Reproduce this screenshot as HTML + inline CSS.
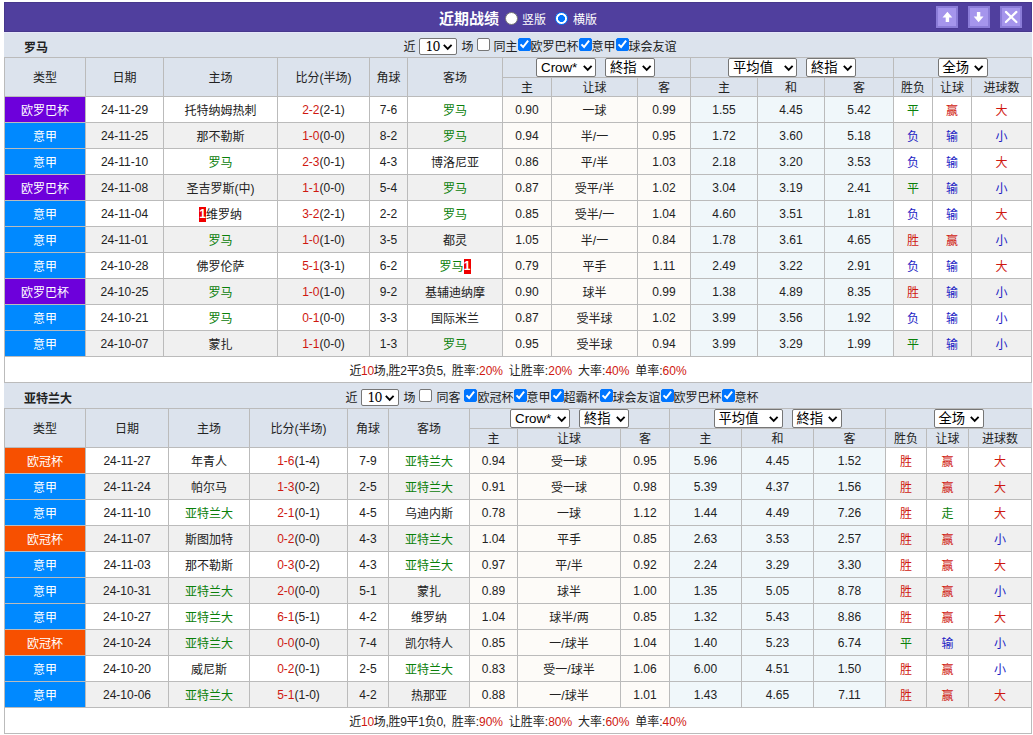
<!DOCTYPE html>
<html lang="zh-CN"><head><meta charset="utf-8"><title>近期战绩</title>
<style>
*{box-sizing:border-box}
html,body{margin:0;padding:0;background:#fff}
body{width:1033px;height:735px;overflow:hidden;font-family:"Liberation Sans","Noto Sans CJK SC",sans-serif;font-size:12px;color:#222;position:relative}
#w{position:absolute;left:4px;top:2px;width:1028px}
.top{height:30px;background:#503f9e;box-shadow:inset 0 0 0 1px #47388c;color:#fff;position:relative;text-align:center;line-height:36px;white-space:nowrap}
.top b{font-size:15px;font-weight:bold;display:inline-block;vertical-align:top;position:relative;top:-1px}
.rd{display:inline-block;width:13px;height:13px;border-radius:50%;background:#fff;border:1px solid #767676;vertical-align:top;margin-top:10px}
.rd.on{border:1px solid #0075ff;background:radial-gradient(circle,#0075ff 0,#0075ff 3.2px,#fff 3.8px)}
.ib{position:absolute;top:4px;width:22px;height:22px;background:#a595ec;border:2px solid #8b7cd8;box-shadow:0 1px 0 #4a3994}
.ib svg{position:absolute;left:0;top:0}
.bar{height:25px;overflow:hidden;background:#dce3ed;line-height:31px;text-align:center;white-space:nowrap;position:relative}
.bar.first{box-shadow:inset 0 1px 0 #e6e6fa}
.tt{float:left;padding-left:20px;font-weight:bold;color:#222;position:relative;top:1px}
.ctl{display:inline-block;vertical-align:top}
.sp{display:inline-block;width:4px}
.sp.s3{width:3px}
.cb{display:inline-block;width:13px;height:13px;border:1px solid #767676;border-radius:2px;background:#fff;vertical-align:top;margin-top:6px;position:relative}
.cb.on{background:#0075ff;border-color:#0075ff}
.cb svg{position:absolute;left:-1px;top:-1px}
.sel{display:inline-block;height:19px;border:1px solid #767676;border-radius:2px;background:#fff;vertical-align:top;position:relative;text-align:left;line-height:16px;color:#000;font-size:13.33px}
.sel .st{position:absolute;left:4px;top:1px;white-space:nowrap}
.sel .chev{position:absolute;right:2.5px;top:5.5px}
.sel.ml{margin-left:9px}
.sel.s10{height:17px;margin-top:6px;font-family:"DejaVu Serif","Liberation Serif",serif;font-size:12.5px;letter-spacing:-0.8px;line-height:15px}
.sel.s10 .st{left:5px;top:0}
.sel.s10 .chev{top:4.5px;right:3.5px}
table.t{border-collapse:separate;border-spacing:1px;background:#bbb;table-layout:fixed;width:1028px}
.t th,.t td{padding:0;text-align:center;font-weight:normal;white-space:nowrap;overflow:hidden}
.t th{background:#dce3ed}
.h1 th{height:38px;padding-bottom:2px}
.h1 th.hs{height:19px;line-height:19px;padding:0}
.t1 .h1 th.hs.f{padding-right:2px}
.h2 th{height:18px;line-height:15px;padding-top:3px}
.t td{height:25px;line-height:22px;padding-top:3px;background:#fff}
.t td.n{line-height:23px;padding-top:2px}
.r1 td{background:#f0f0f0}
.t td.p{background:#fdfbf8}
.t td.q{background:#f0f7fa}
.t td.lg{color:#fff}
.t td.e{background:#6d00db}
.t td.s{background:#0089ff}
.t td.c{background:#f75000}
.g{color:#0a800a}.r{color:#cf1810}.b{color:#1c1cc4}
td.g{color:#0a800a}td.r{color:#cf1810}td.b{color:#1c1cc4}
.rc{background:#f00000;color:#fff;font-weight:bold;display:inline-block;line-height:15px;height:15px;width:7px;text-align:center;vertical-align:top;margin-top:3px;overflow:hidden}
.sm td{background:#fff !important;word-spacing:2.5px}
.sm .r{color:#cf1810}
.ls{letter-spacing:-0.3px}
</style></head>
<body>
<div id="w">
<div class="top"><b>近期战绩</b><span style="display:inline-block;width:6px"></span><span class="rd"></span><span style="display:inline-block;width:4px"></span>竖版<span style="display:inline-block;width:9px"></span><span class="rd on"></span><span style="display:inline-block;width:5px"></span>横版<span class="ib" style="left:932px"><svg width="18" height="18" viewBox="0 0 18 18"><path d="M9.4 3.8 L14.3 9.4 L11.1 9.4 L11.1 14 L7.7 14 L7.7 9.4 L4.5 9.4 Z" fill="#fff"/></svg></span><span class="ib" style="left:964px"><svg width="18" height="18" viewBox="0 0 18 18"><path d="M8.6 14.2 L3.7 8.6 L6.9 8.6 L6.9 4 L10.3 4 L10.3 8.6 L13.5 8.6 Z" fill="#fff"/></svg></span><span class="ib" style="left:996px"><svg width="18" height="18" viewBox="0 0 18 18"><path d="M3.9 3.9 L14.4 14 M14.4 3.9 L3.9 14" stroke="#fff" stroke-width="2.2" stroke-linecap="round" fill="none"/></svg></span></div>
<div class="bar first"><span class="tt">罗马</span><span class="ctl">近<span class="sp"></span><span class="sel s10" style="width:38px"><span class="st">10</span><svg class="chev" viewBox="0 0 10 7" width="10" height="7"><path d="M0.8 0.9 L4.7 4.8 L8.6 0.9" fill="none" stroke="#000" stroke-width="1.9" stroke-linecap="butt" stroke-linejoin="miter"/></svg></span><span class="sp"></span>场<span class="sp"></span><span class="cb"></span><span class="sp s3"></span>同主<span class="cb on"><svg viewBox="0 0 13 13" width="13" height="13"><path d="M2.5 6.4 L5.1 9 L10.1 2.7" fill="none" stroke="#fff" stroke-width="2"/></svg></span>欧罗巴杯<span class="cb on"><svg viewBox="0 0 13 13" width="13" height="13"><path d="M2.5 6.4 L5.1 9 L10.1 2.7" fill="none" stroke="#fff" stroke-width="2"/></svg></span>意甲<span class="cb on"><svg viewBox="0 0 13 13" width="13" height="13"><path d="M2.5 6.4 L5.1 9 L10.1 2.7" fill="none" stroke="#fff" stroke-width="2"/></svg></span>球会友谊</span></div>
<table class="t t1" cellspacing="1" cellpadding="0">
<colgroup><col style="width:80px"><col style="width:77px"><col style="width:113px"><col style="width:91px"><col style="width:37px"><col style="width:94px"><col style="width:48px"><col style="width:85px"><col style="width:52px"><col style="width:66px"><col style="width:66px"><col style="width:68px"><col style="width:38px"><col style="width:38px"><col style="width:59px"></colgroup>
<tr class="h h1"><th rowspan="2">类型</th><th rowspan="2">日期</th><th rowspan="2">主场</th><th rowspan="2">比分(半场)</th><th rowspan="2">角球</th><th rowspan="2">客场</th><th colspan="3" class="hs f"><span class="sel " style="width:60px"><span class="st">Crow*</span><svg class="chev" viewBox="0 0 10 7" width="10" height="7"><path d="M0.8 0.9 L4.7 4.8 L8.6 0.9" fill="none" stroke="#000" stroke-width="1.9" stroke-linecap="butt" stroke-linejoin="miter"/></svg></span><span class="sel ml" style="width:50px"><span class="st">終指</span><svg class="chev" viewBox="0 0 10 7" width="10" height="7"><path d="M0.8 0.9 L4.7 4.8 L8.6 0.9" fill="none" stroke="#000" stroke-width="1.9" stroke-linecap="butt" stroke-linejoin="miter"/></svg></span></th><th colspan="3" class="hs"><span class="sel " style="width:69px"><span class="st">平均值</span><svg class="chev" viewBox="0 0 10 7" width="10" height="7"><path d="M0.8 0.9 L4.7 4.8 L8.6 0.9" fill="none" stroke="#000" stroke-width="1.9" stroke-linecap="butt" stroke-linejoin="miter"/></svg></span><span class="sel ml" style="width:50px"><span class="st">終指</span><svg class="chev" viewBox="0 0 10 7" width="10" height="7"><path d="M0.8 0.9 L4.7 4.8 L8.6 0.9" fill="none" stroke="#000" stroke-width="1.9" stroke-linecap="butt" stroke-linejoin="miter"/></svg></span></th><th colspan="3" class="hs"><span class="sel " style="width:50px"><span class="st">全场</span><svg class="chev" viewBox="0 0 10 7" width="10" height="7"><path d="M0.8 0.9 L4.7 4.8 L8.6 0.9" fill="none" stroke="#000" stroke-width="1.9" stroke-linecap="butt" stroke-linejoin="miter"/></svg></span></th></tr>
<tr class="h h2"><th>主</th><th>让球</th><th>客</th><th>主</th><th>和</th><th>客</th><th>胜负</th><th>让球</th><th>进球数</th></tr>
<tr class="r0"><td class="lg e">欧罗巴杯</td><td class="n">24-11-29</td><td>托特纳姆热刺</td><td class="n"><span class="r">2-2</span>(2-1)</td><td class="n">7-6</td><td><span class="g">罗马</span></td><td class="p n">0.90</td><td class="p">一球</td><td class="p n">0.99</td><td class="q n">1.55</td><td class="q n">4.45</td><td class="q n">5.42</td><td class="g">平</td><td class="r">赢</td><td class="r">大</td></tr>
<tr class="r1"><td class="lg s">意甲</td><td class="n">24-11-25</td><td>那不勒斯</td><td class="n"><span class="r">1-0</span>(0-0)</td><td class="n">8-2</td><td><span class="g">罗马</span></td><td class="p n">0.94</td><td class="p">半/一</td><td class="p n">0.95</td><td class="q n">1.72</td><td class="q n">3.60</td><td class="q n">5.18</td><td class="b">负</td><td class="b">输</td><td class="b">小</td></tr>
<tr class="r0"><td class="lg s">意甲</td><td class="n">24-11-10</td><td><span class="g">罗马</span></td><td class="n"><span class="r">2-3</span>(0-1)</td><td class="n">4-3</td><td>博洛尼亚</td><td class="p n">0.86</td><td class="p">平/半</td><td class="p n">1.03</td><td class="q n">2.18</td><td class="q n">3.20</td><td class="q n">3.53</td><td class="b">负</td><td class="b">输</td><td class="r">大</td></tr>
<tr class="r1"><td class="lg e">欧罗巴杯</td><td class="n">24-11-08</td><td>圣吉罗斯(中)</td><td class="n"><span class="r">1-1</span>(0-0)</td><td class="n">5-4</td><td><span class="g">罗马</span></td><td class="p n">0.87</td><td class="p">受平/半</td><td class="p n">1.02</td><td class="q n">3.04</td><td class="q n">3.19</td><td class="q n">2.41</td><td class="g">平</td><td class="b">输</td><td class="b">小</td></tr>
<tr class="r0"><td class="lg s">意甲</td><td class="n">24-11-04</td><td><span class="rc">1</span>维罗纳</td><td class="n"><span class="r">3-2</span>(2-1)</td><td class="n">2-2</td><td><span class="g">罗马</span></td><td class="p n">0.85</td><td class="p">受半/一</td><td class="p n">1.04</td><td class="q n">4.60</td><td class="q n">3.51</td><td class="q n">1.81</td><td class="b">负</td><td class="b">输</td><td class="r">大</td></tr>
<tr class="r1"><td class="lg s">意甲</td><td class="n">24-11-01</td><td><span class="g">罗马</span></td><td class="n"><span class="r">1-0</span>(1-0)</td><td class="n">3-5</td><td>都灵</td><td class="p n">1.05</td><td class="p">半/一</td><td class="p n">0.84</td><td class="q n">1.78</td><td class="q n">3.61</td><td class="q n">4.65</td><td class="r">胜</td><td class="r">赢</td><td class="b">小</td></tr>
<tr class="r0"><td class="lg s">意甲</td><td class="n">24-10-28</td><td>佛罗伦萨</td><td class="n"><span class="r">5-1</span>(3-1)</td><td class="n">6-2</td><td><span class="g">罗马</span><span class="rc">1</span></td><td class="p n">0.79</td><td class="p">平手</td><td class="p n">1.11</td><td class="q n">2.49</td><td class="q n">3.22</td><td class="q n">2.91</td><td class="b">负</td><td class="b">输</td><td class="r">大</td></tr>
<tr class="r1"><td class="lg e">欧罗巴杯</td><td class="n">24-10-25</td><td><span class="g">罗马</span></td><td class="n"><span class="r">1-0</span>(1-0)</td><td class="n">9-2</td><td>基辅迪纳摩</td><td class="p n">0.90</td><td class="p">球半</td><td class="p n">0.99</td><td class="q n">1.38</td><td class="q n">4.89</td><td class="q n">8.35</td><td class="r">胜</td><td class="b">输</td><td class="b">小</td></tr>
<tr class="r0"><td class="lg s">意甲</td><td class="n">24-10-21</td><td><span class="g">罗马</span></td><td class="n"><span class="r">0-1</span>(0-0)</td><td class="n">3-3</td><td>国际米兰</td><td class="p n">0.87</td><td class="p">受半球</td><td class="p n">1.02</td><td class="q n">3.99</td><td class="q n">3.56</td><td class="q n">1.92</td><td class="b">负</td><td class="b">输</td><td class="b">小</td></tr>
<tr class="r1"><td class="lg s">意甲</td><td class="n">24-10-07</td><td>蒙扎</td><td class="n"><span class="r">1-1</span>(0-0)</td><td class="n">1-3</td><td><span class="g">罗马</span></td><td class="p n">0.95</td><td class="p">受半球</td><td class="p n">0.94</td><td class="q n">3.99</td><td class="q n">3.29</td><td class="q n">1.99</td><td class="g">平</td><td class="b">输</td><td class="b">小</td></tr>
<tr class="sm"><td colspan="15"><span class="ls">近<span class="r">10</span>场,胜2平3负5,</span> 胜率:<span class="r">20%</span> 让胜率:<span class="r">20%</span> 大率:<span class="r">40%</span> 单率:<span class="r">60%</span></td></tr>
</table>
<div class="bar"><span class="tt">亚特兰大</span><span class="ctl">近<span class="sp"></span><span class="sel s10" style="width:38px"><span class="st">10</span><svg class="chev" viewBox="0 0 10 7" width="10" height="7"><path d="M0.8 0.9 L4.7 4.8 L8.6 0.9" fill="none" stroke="#000" stroke-width="1.9" stroke-linecap="butt" stroke-linejoin="miter"/></svg></span><span class="sp"></span>场<span class="sp"></span><span class="cb"></span><span class="sp"></span>同客<span class="sp"></span><span class="cb on"><svg viewBox="0 0 13 13" width="13" height="13"><path d="M2.5 6.4 L5.1 9 L10.1 2.7" fill="none" stroke="#fff" stroke-width="2"/></svg></span>欧冠杯<span class="cb on"><svg viewBox="0 0 13 13" width="13" height="13"><path d="M2.5 6.4 L5.1 9 L10.1 2.7" fill="none" stroke="#fff" stroke-width="2"/></svg></span>意甲<span class="cb on"><svg viewBox="0 0 13 13" width="13" height="13"><path d="M2.5 6.4 L5.1 9 L10.1 2.7" fill="none" stroke="#fff" stroke-width="2"/></svg></span>超霸杯<span class="cb on"><svg viewBox="0 0 13 13" width="13" height="13"><path d="M2.5 6.4 L5.1 9 L10.1 2.7" fill="none" stroke="#fff" stroke-width="2"/></svg></span>球会友谊<span class="cb on"><svg viewBox="0 0 13 13" width="13" height="13"><path d="M2.5 6.4 L5.1 9 L10.1 2.7" fill="none" stroke="#fff" stroke-width="2"/></svg></span>欧罗巴杯<span class="cb on"><svg viewBox="0 0 13 13" width="13" height="13"><path d="M2.5 6.4 L5.1 9 L10.1 2.7" fill="none" stroke="#fff" stroke-width="2"/></svg></span>意杯</span></div>
<table class="t " cellspacing="1" cellpadding="0">
<colgroup><col style="width:80px"><col style="width:82px"><col style="width:80px"><col style="width:97px"><col style="width:40px"><col style="width:80px"><col style="width:47px"><col style="width:102px"><col style="width:48px"><col style="width:71px"><col style="width:71px"><col style="width:71px"><col style="width:40px"><col style="width:41px"><col style="width:62px"></colgroup>
<tr class="h h1"><th rowspan="2">类型</th><th rowspan="2">日期</th><th rowspan="2">主场</th><th rowspan="2">比分(半场)</th><th rowspan="2">角球</th><th rowspan="2">客场</th><th colspan="3" class="hs f"><span class="sel " style="width:60px"><span class="st">Crow*</span><svg class="chev" viewBox="0 0 10 7" width="10" height="7"><path d="M0.8 0.9 L4.7 4.8 L8.6 0.9" fill="none" stroke="#000" stroke-width="1.9" stroke-linecap="butt" stroke-linejoin="miter"/></svg></span><span class="sel ml" style="width:50px"><span class="st">終指</span><svg class="chev" viewBox="0 0 10 7" width="10" height="7"><path d="M0.8 0.9 L4.7 4.8 L8.6 0.9" fill="none" stroke="#000" stroke-width="1.9" stroke-linecap="butt" stroke-linejoin="miter"/></svg></span></th><th colspan="3" class="hs"><span class="sel " style="width:69px"><span class="st">平均值</span><svg class="chev" viewBox="0 0 10 7" width="10" height="7"><path d="M0.8 0.9 L4.7 4.8 L8.6 0.9" fill="none" stroke="#000" stroke-width="1.9" stroke-linecap="butt" stroke-linejoin="miter"/></svg></span><span class="sel ml" style="width:50px"><span class="st">終指</span><svg class="chev" viewBox="0 0 10 7" width="10" height="7"><path d="M0.8 0.9 L4.7 4.8 L8.6 0.9" fill="none" stroke="#000" stroke-width="1.9" stroke-linecap="butt" stroke-linejoin="miter"/></svg></span></th><th colspan="3" class="hs"><span class="sel " style="width:50px"><span class="st">全场</span><svg class="chev" viewBox="0 0 10 7" width="10" height="7"><path d="M0.8 0.9 L4.7 4.8 L8.6 0.9" fill="none" stroke="#000" stroke-width="1.9" stroke-linecap="butt" stroke-linejoin="miter"/></svg></span></th></tr>
<tr class="h h2"><th>主</th><th>让球</th><th>客</th><th>主</th><th>和</th><th>客</th><th>胜负</th><th>让球</th><th>进球数</th></tr>
<tr class="r0"><td class="lg c">欧冠杯</td><td class="n">24-11-27</td><td>年青人</td><td class="n"><span class="r">1-6</span>(1-4)</td><td class="n">7-9</td><td><span class="g">亚特兰大</span></td><td class="p n">0.94</td><td class="p">受一球</td><td class="p n">0.95</td><td class="q n">5.96</td><td class="q n">4.45</td><td class="q n">1.52</td><td class="r">胜</td><td class="r">赢</td><td class="r">大</td></tr>
<tr class="r1"><td class="lg s">意甲</td><td class="n">24-11-24</td><td>帕尔马</td><td class="n"><span class="r">1-3</span>(0-2)</td><td class="n">2-5</td><td><span class="g">亚特兰大</span></td><td class="p n">0.91</td><td class="p">受一球</td><td class="p n">0.98</td><td class="q n">5.39</td><td class="q n">4.37</td><td class="q n">1.56</td><td class="r">胜</td><td class="r">赢</td><td class="r">大</td></tr>
<tr class="r0"><td class="lg s">意甲</td><td class="n">24-11-10</td><td><span class="g">亚特兰大</span></td><td class="n"><span class="r">2-1</span>(0-1)</td><td class="n">4-5</td><td>乌迪内斯</td><td class="p n">0.78</td><td class="p">一球</td><td class="p n">1.12</td><td class="q n">1.44</td><td class="q n">4.49</td><td class="q n">7.26</td><td class="r">胜</td><td class="g">走</td><td class="r">大</td></tr>
<tr class="r1"><td class="lg c">欧冠杯</td><td class="n">24-11-07</td><td>斯图加特</td><td class="n"><span class="r">0-2</span>(0-0)</td><td class="n">4-3</td><td><span class="g">亚特兰大</span></td><td class="p n">1.04</td><td class="p">平手</td><td class="p n">0.85</td><td class="q n">2.63</td><td class="q n">3.53</td><td class="q n">2.57</td><td class="r">胜</td><td class="r">赢</td><td class="b">小</td></tr>
<tr class="r0"><td class="lg s">意甲</td><td class="n">24-11-03</td><td>那不勒斯</td><td class="n"><span class="r">0-3</span>(0-2)</td><td class="n">4-3</td><td><span class="g">亚特兰大</span></td><td class="p n">0.97</td><td class="p">平/半</td><td class="p n">0.92</td><td class="q n">2.24</td><td class="q n">3.29</td><td class="q n">3.30</td><td class="r">胜</td><td class="r">赢</td><td class="r">大</td></tr>
<tr class="r1"><td class="lg s">意甲</td><td class="n">24-10-31</td><td><span class="g">亚特兰大</span></td><td class="n"><span class="r">2-0</span>(0-0)</td><td class="n">5-1</td><td>蒙扎</td><td class="p n">0.89</td><td class="p">球半</td><td class="p n">1.00</td><td class="q n">1.35</td><td class="q n">5.05</td><td class="q n">8.78</td><td class="r">胜</td><td class="r">赢</td><td class="b">小</td></tr>
<tr class="r0"><td class="lg s">意甲</td><td class="n">24-10-27</td><td><span class="g">亚特兰大</span></td><td class="n"><span class="r">6-1</span>(5-1)</td><td class="n">4-2</td><td>维罗纳</td><td class="p n">1.04</td><td class="p">球半/两</td><td class="p n">0.85</td><td class="q n">1.32</td><td class="q n">5.43</td><td class="q n">8.86</td><td class="r">胜</td><td class="r">赢</td><td class="r">大</td></tr>
<tr class="r1"><td class="lg c">欧冠杯</td><td class="n">24-10-24</td><td><span class="g">亚特兰大</span></td><td class="n"><span class="r">0-0</span>(0-0)</td><td class="n">7-4</td><td>凯尔特人</td><td class="p n">0.85</td><td class="p">一/球半</td><td class="p n">1.04</td><td class="q n">1.40</td><td class="q n">5.23</td><td class="q n">6.74</td><td class="g">平</td><td class="b">输</td><td class="b">小</td></tr>
<tr class="r0"><td class="lg s">意甲</td><td class="n">24-10-20</td><td>威尼斯</td><td class="n"><span class="r">0-2</span>(0-1)</td><td class="n">2-5</td><td><span class="g">亚特兰大</span></td><td class="p n">0.83</td><td class="p">受一/球半</td><td class="p n">1.06</td><td class="q n">6.00</td><td class="q n">4.51</td><td class="q n">1.50</td><td class="r">胜</td><td class="r">赢</td><td class="b">小</td></tr>
<tr class="r1"><td class="lg s">意甲</td><td class="n">24-10-06</td><td><span class="g">亚特兰大</span></td><td class="n"><span class="r">5-1</span>(1-0)</td><td class="n">4-2</td><td>热那亚</td><td class="p n">0.88</td><td class="p">一/球半</td><td class="p n">1.01</td><td class="q n">1.43</td><td class="q n">4.65</td><td class="q n">7.11</td><td class="r">胜</td><td class="r">赢</td><td class="r">大</td></tr>
<tr class="sm"><td colspan="15"><span class="ls">近<span class="r">10</span>场,胜9平1负0,</span> 胜率:<span class="r">90%</span> 让胜率:<span class="r">80%</span> 大率:<span class="r">60%</span> 单率:<span class="r">40%</span></td></tr>
</table>
</div>
</body></html>
